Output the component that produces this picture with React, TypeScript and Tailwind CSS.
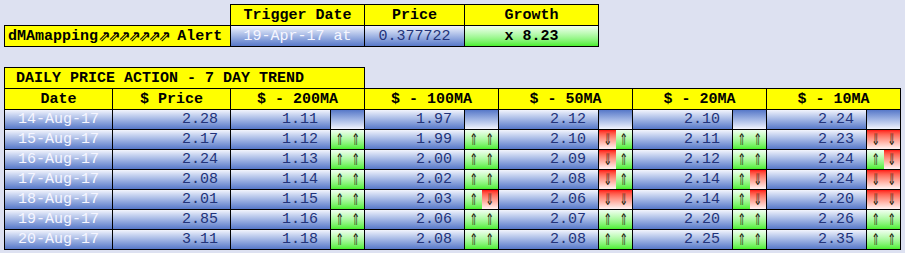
import React from "react";

type Trend = "" | "uu" | "ud" | "du" | "dd";

interface Row {
  date: string;
  price: string;
  ma: [string, Trend][];
}

const rows: Row[] = [
  { date: "14-Aug-17", price: "2.28", ma: [["1.11", ""], ["1.97", ""], ["2.12", ""], ["2.10", ""], ["2.24", ""]] },
  { date: "15-Aug-17", price: "2.17", ma: [["1.12", "uu"], ["1.99", "uu"], ["2.10", "du"], ["2.11", "uu"], ["2.23", "dd"]] },
  { date: "16-Aug-17", price: "2.24", ma: [["1.13", "uu"], ["2.00", "uu"], ["2.09", "du"], ["2.12", "uu"], ["2.24", "ud"]] },
  { date: "17-Aug-17", price: "2.08", ma: [["1.14", "uu"], ["2.02", "uu"], ["2.08", "du"], ["2.14", "ud"], ["2.24", "dd"]] },
  { date: "18-Aug-17", price: "2.01", ma: [["1.15", "uu"], ["2.03", "ud"], ["2.06", "dd"], ["2.14", "ud"], ["2.20", "dd"]] },
  { date: "19-Aug-17", price: "2.85", ma: [["1.16", "uu"], ["2.06", "uu"], ["2.07", "uu"], ["2.20", "uu"], ["2.26", "uu"]] },
  { date: "20-Aug-17", price: "3.11", ma: [["1.18", "uu"], ["2.08", "uu"], ["2.08", "uu"], ["2.25", "uu"], ["2.35", "uu"]] },
];

const maHeads = ["$ - 200MA", "$ - 100MA", "$ - 50MA", "$ - 20MA", "$ - 10MA"];

// cells overlap their neighbour by 1px so borders collapse
const cell = "box-border border border-black -mr-px flex items-center";
const yellow = "bg-[#ffff00] text-black font-bold justify-center";
const blue = "bg-linear-to-b from-[#f2f4fc] to-[#5878c8]";
const blueUp = "bg-linear-to-b from-[#5878c8] to-[#f2f4fc]";
const green = "bg-linear-to-b from-[#f0fff0] to-[#48ee28]";
const red = "bg-linear-to-b from-[#ff1010] to-[#fff4f4]";

function Half({ dir }: { dir: string }) {
  return (
    <div className={`flex-1 h-full flex items-center justify-center text-[#262610] ${dir === "u" ? green : red}`}>
      <span className="inline-block font-['DejaVu_Sans',sans-serif] text-[16px] leading-[16px] scale-x-[0.62]">
        {dir === "u" ? "⇑" : "⇓"}
      </span>
    </div>
  );
}

function TrendCell({ t }: { t: Trend }) {
  if (!t) return <div className={`${cell} w-[35px] h-full ${blueUp}`} />;
  return (
    <div className={`${cell} w-[35px] h-full`}>
      <Half dir={t[0]} />
      <Half dir={t[1]} />
    </div>
  );
}

export default function App() {
  return (
    <div className="w-[905px] h-[253px] bg-[#dde1f1] pt-[4px] pl-[4px] text-[15px] leading-none font-['Liberation_Mono','DejaVu_Sans_Mono',monospace]">
      {/* Alert summary */}
      <div className="flex h-[22px] -mb-px">
        <div className="w-[226px]" />
        <div className={`${cell} ${yellow} w-[135px]`}>Trigger Date</div>
        <div className={`${cell} ${yellow} w-[101px]`}>Price</div>
        <div className={`${cell} ${yellow} w-[135px]`}>Growth</div>
      </div>
      <div className="flex h-[22px]">
        <div className={`${cell} bg-[#ffff00] text-black font-bold w-[227px] pl-[3px] whitespace-pre`}>
          dMAmapping<span className="text-[20px] leading-[16px] tracking-[-2px]">⇗⇗⇗⇗⇗⇗⇗</span> Alert
        </div>
        <div className={`${cell} ${blue} w-[135px] justify-center text-[#f6f6ff]`}>19-Apr-17 at</div>
        <div className={`${cell} ${blue} w-[101px] justify-center text-[#22337a]`}>0.377722</div>
        <div className={`${cell} ${green} w-[135px] justify-center text-black font-bold`}>x 8.23</div>
      </div>

      {/* Daily trend */}
      <div className="mt-[20px] flex h-[22px] -mb-px">
        <div className={`${cell} bg-[#ffff00] text-black font-bold w-[361px] pl-[11px]`}>DAILY PRICE ACTION - 7 DAY TREND</div>
      </div>
      <div className="flex h-[22px] -mb-px">
        <div className={`${cell} ${yellow} w-[109px]`}>Date</div>
        <div className={`${cell} ${yellow} w-[119px]`}>$ Price</div>
        {maHeads.map((h) => (
          <div key={h} className={`${cell} ${yellow} w-[135px]`}>{h}</div>
        ))}
      </div>
      {rows.map((r) => (
        <div key={r.date} className="flex h-[21px] -mb-px">
          <div className={`${cell} ${blue} w-[109px] justify-center text-[#f6f6ff]`}>{r.date}</div>
          <div className={`${cell} ${blue} w-[119px] justify-end pr-[12px] text-[#22337a]`}>{r.price}</div>
          {r.ma.map(([v, t], i) => (
            <React.Fragment key={i}>
              <div className={`${cell} ${blue} w-[101px] justify-end pr-[12px] text-[#22337a]`}>{v}</div>
              <TrendCell t={t} />
            </React.Fragment>
          ))}
        </div>
      ))}
    </div>
  );
}
